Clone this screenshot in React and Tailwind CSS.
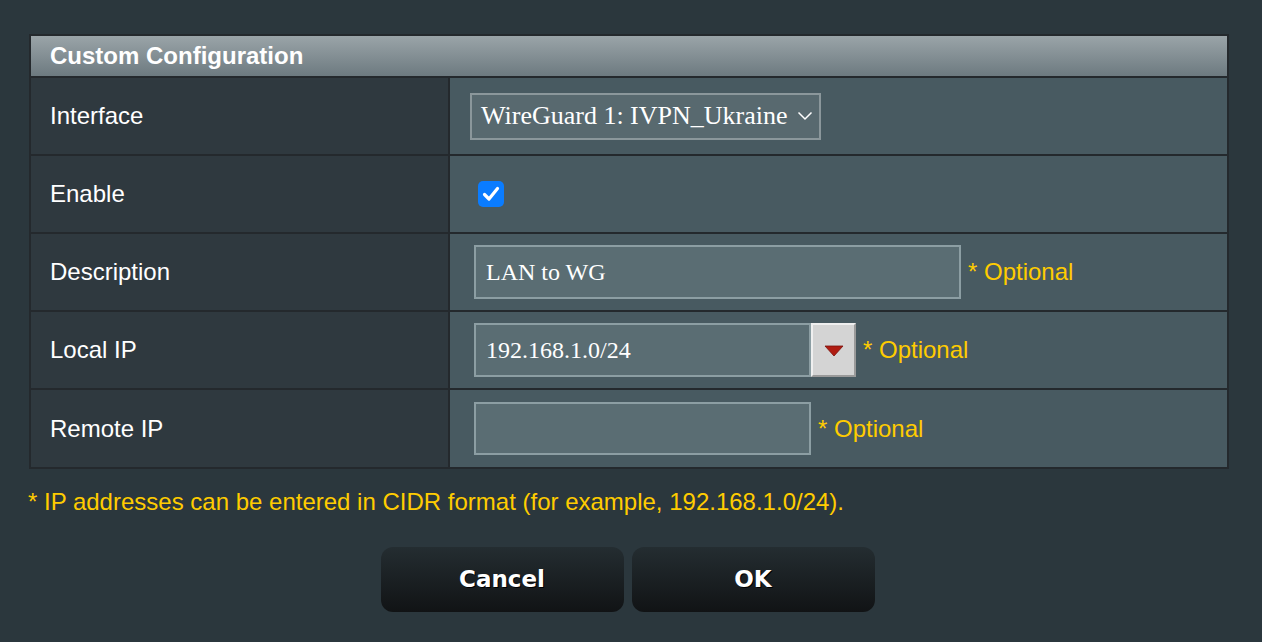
import React from "react";

const sans = { fontFamily: '"Liberation Sans", Arial, sans-serif' };
const serif = { fontFamily: '"Liberation Serif", "Times New Roman", serif' };

function Row({ label, children, last }) {
  return (
    <div className={`grid grid-cols-[419px_1fr] ${last ? "h-[77px]" : "h-[78px] border-b-2 border-[#24292d]"}`}>
      <div className="bg-[#2f393f] border-r-2 border-[#24292d] flex items-center pl-[19px] text-white text-[24px] leading-none" style={sans}>
        {label}
      </div>
      <div className="bg-[#485a61] flex items-center pl-[22px]">{children}</div>
    </div>
  );
}

function Optional() {
  return (
    <span className="text-[#ffcc00] text-[24px] leading-none ml-[7px]" style={sans}>
      * Optional
    </span>
  );
}

export default function App() {
  return (
    <div className="w-[1262px] h-[642px] bg-[#2b373d] pt-[34px] px-[29px]">
      <div className="w-[1200px] border-2 border-[#24292d]">
        <div
          className="h-[42px] flex items-center pl-[19px] text-white font-bold text-[24px] leading-none border-b-2 border-[#24292d]"
          style={{ ...sans, background: "linear-gradient(#9aa4a8, #6d7a80)" }}
        >
          Custom Configuration
        </div>
        <Row label="Interface">
          <div className="ml-[-2px] w-[351px] h-[47px] border-2 border-[#8b979b] bg-[#58696f] flex items-center pl-[9px] pr-[6px] text-white text-[26px] leading-none" style={serif}>
            <span className="whitespace-nowrap">WireGuard 1: IVPN_Ukraine</span>
            <svg width="16" height="10" viewBox="0 0 16 10" className="ml-[9px]">
              <path d="M1.5 1.5 L8 8 L14.5 1.5" fill="none" stroke="white" strokeWidth="1.5" />
            </svg>
          </div>
        </Row>
        <Row label="Enable">
          <div className="ml-[6px] w-[26px] h-[26px] rounded-[5px] bg-[#0a7cff] flex items-center justify-center">
            <svg width="18" height="16" viewBox="0 0 18 16">
              <path d="M2.5 8.5 L7 13 L15.5 2.5" fill="none" stroke="white" strokeWidth="3.2" strokeLinecap="round" strokeLinejoin="round" />
            </svg>
          </div>
        </Row>
        <Row label="Description">
          <div className="ml-[2px] w-[487px] h-[54px] border-2 border-[#8c9ea3] bg-[#5a6d73] flex items-center pl-[10px] text-white text-[24px] leading-none" style={serif}>
            LAN to WG
          </div>
          <Optional />
        </Row>
        <Row label="Local IP">
          <div className="ml-[2px] w-[337px] h-[54px] border-2 border-[#8c9ea3] bg-[#5a6d73] flex items-center pl-[10px] text-white text-[24px] leading-none" style={serif}>
            192.168.1.0/24
          </div>
          <div className="w-[45px] h-[54px] bg-[#d4d4d4] border-t-2 border-l-2 border-[#efefef] border-r-2 border-b-2 border-r-[#9a9a9a] border-b-[#9a9a9a] flex items-center justify-center">
            <svg width="20" height="12" viewBox="0 0 20 12" className="mt-[2px]">
              <path d="M1 1 L19 1 L10 11 Z" fill="#b01c12" stroke="#7a120c" strokeWidth="0.8" strokeLinejoin="round" />
            </svg>
          </div>
          <Optional />
        </Row>
        <Row label="Remote IP" last>
          <div className="ml-[2px] w-[337px] h-[53px] border-2 border-[#8c9ea3] bg-[#5a6d73]" />
          <Optional />
        </Row>
      </div>
      <div className="mt-[19px] ml-[-1px] text-[#ffcc00] text-[24px] leading-[28px]" style={sans}>
        * IP addresses can be entered in CIDR format (for example, 192.168.1.0/24).
      </div>
      <div className="mt-[31px] flex justify-center gap-[8px] pr-[7px]">
        {["Cancel", "OK"].map((t) => (
          <div
            key={t}
            className="w-[243px] h-[65px] rounded-[12px] flex items-center justify-center text-white font-bold text-[23px] leading-none"
            style={{
              fontFamily: '"DejaVu Sans", Verdana, sans-serif',
              background: "linear-gradient(#242d31, #111315)",
              textShadow: "1px 1px 0 #000",
            }}
          >
            {t}
          </div>
        ))}
      </div>
    </div>
  );
}
